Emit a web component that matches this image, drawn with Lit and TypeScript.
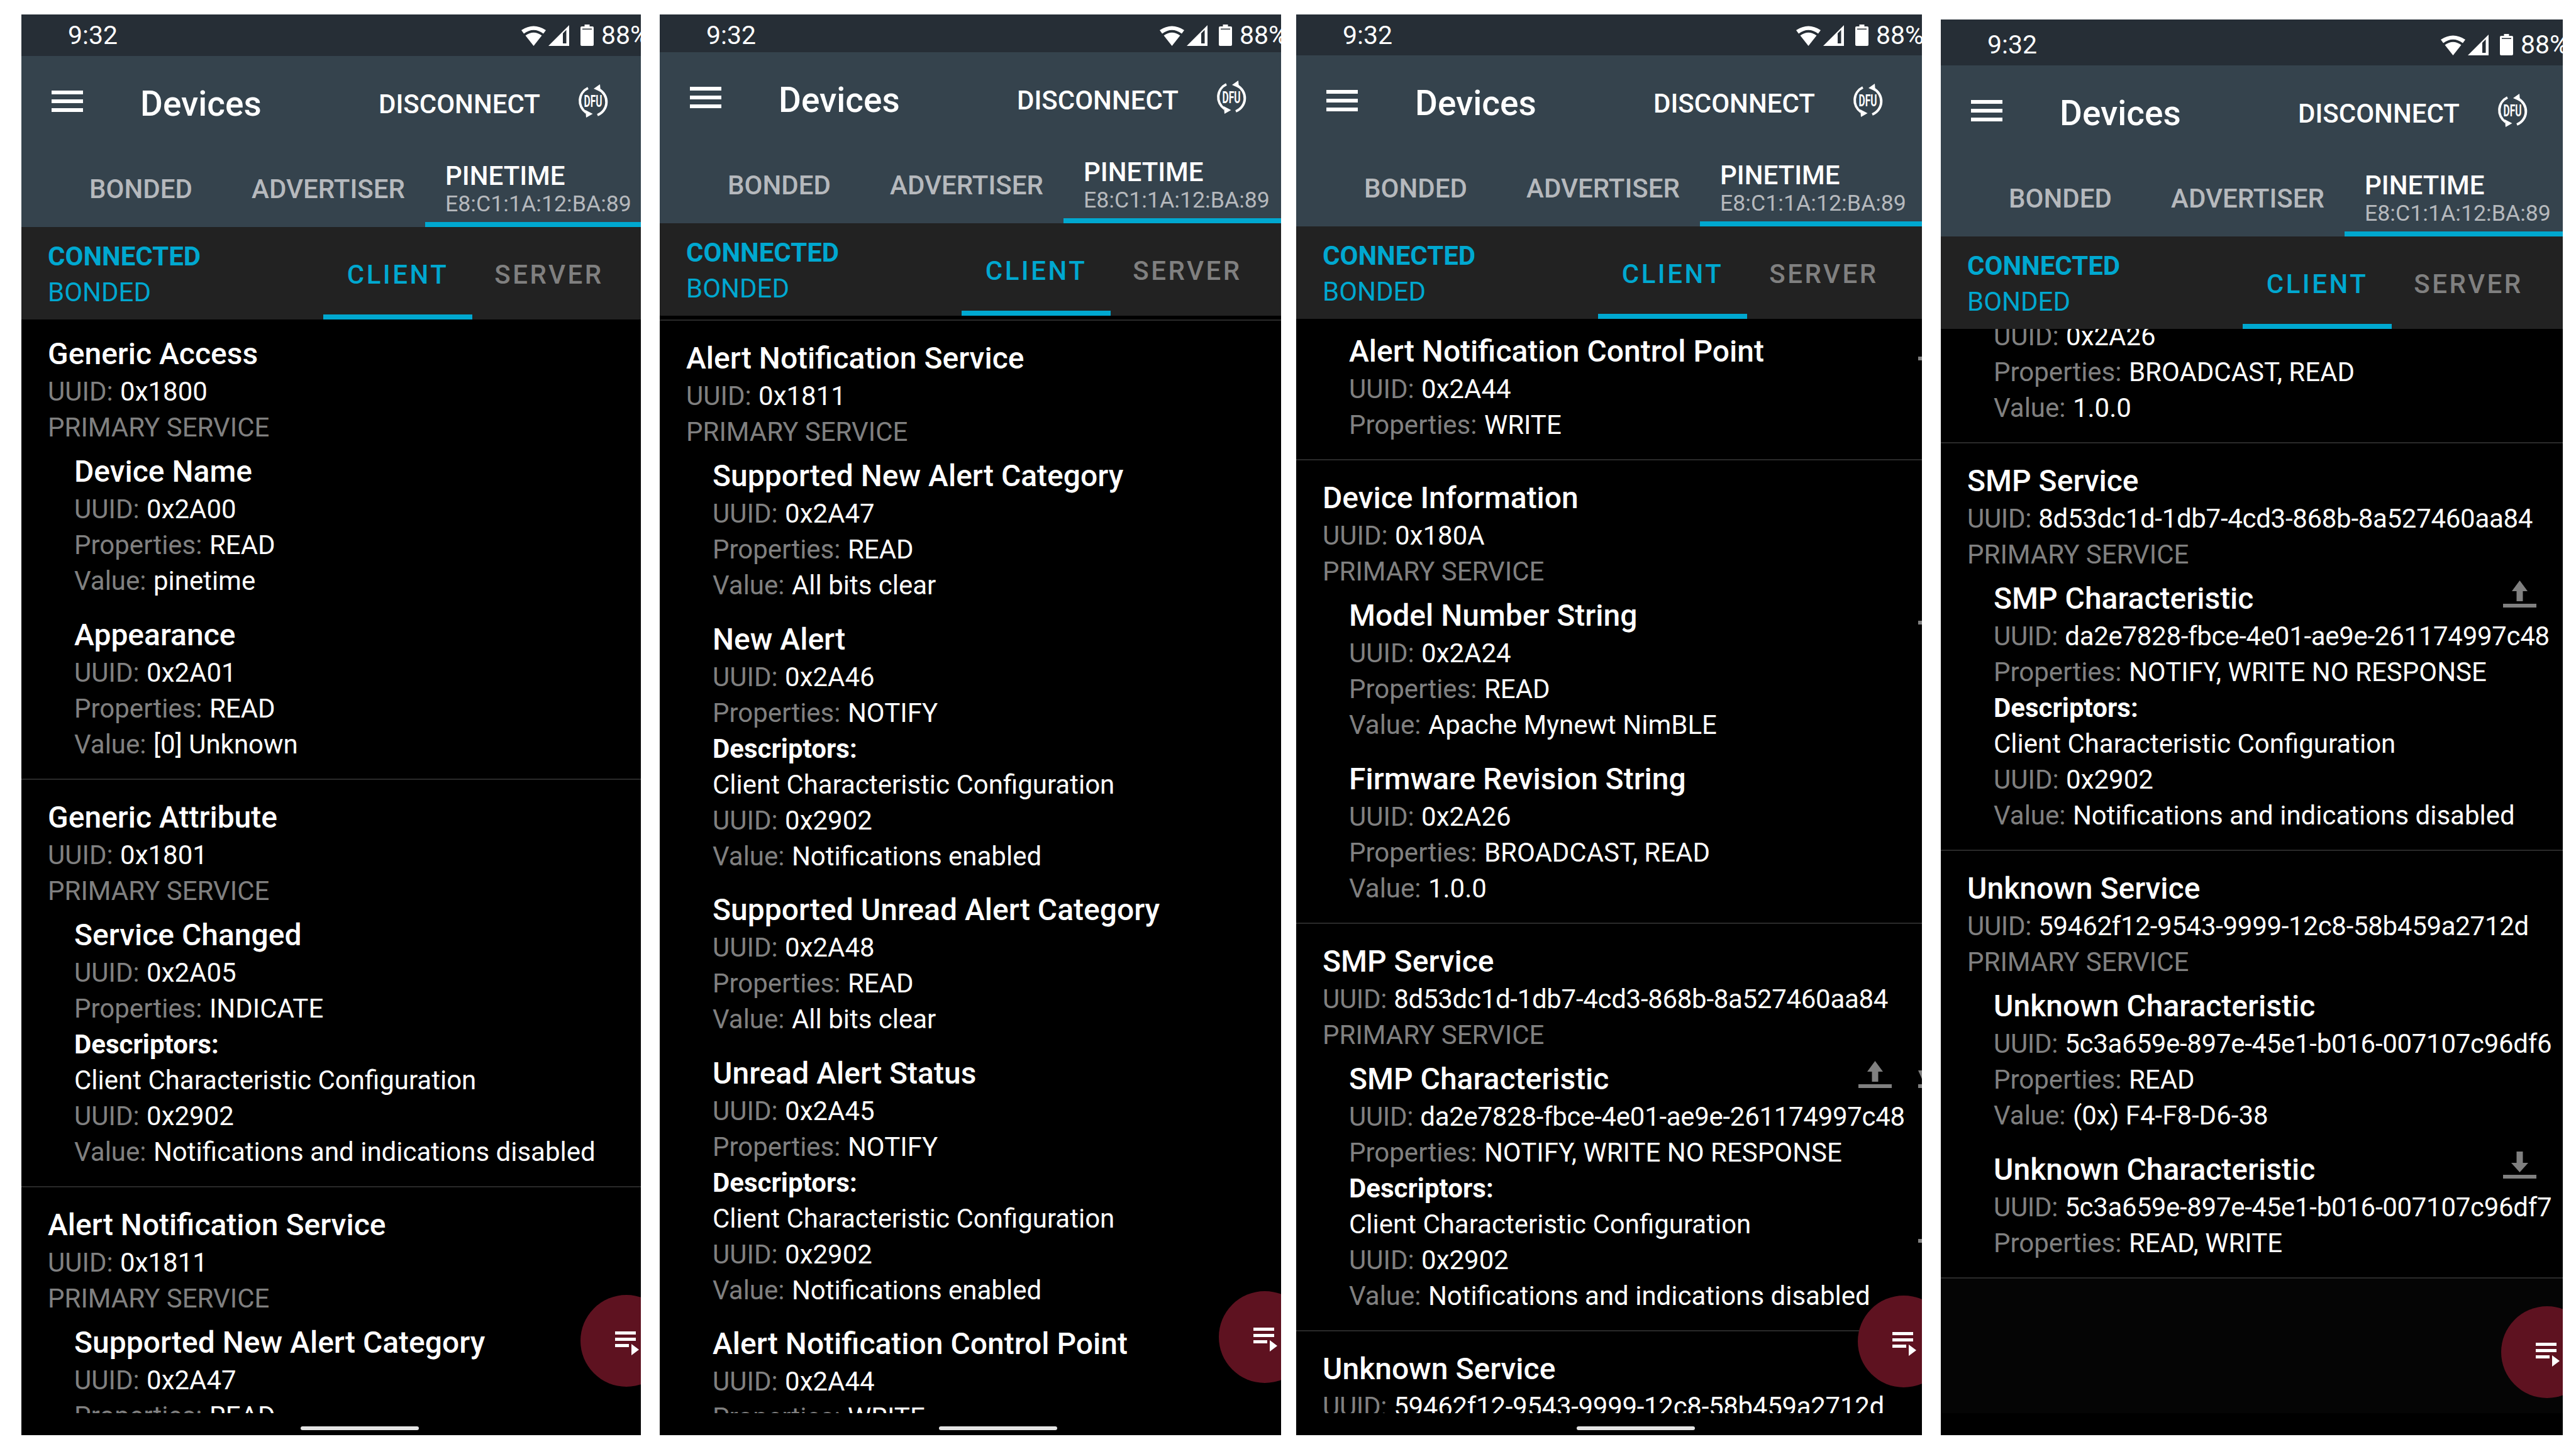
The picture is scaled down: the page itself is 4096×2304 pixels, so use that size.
import { LitElement, html, css, svg } from "lit";
import { customElement } from "lit/decorators.js";
import { classMap } from "lit/directives/class-map.js";

type Row = [string, string];
interface Char { t: string; rows: (Row | string)[]; up?: boolean; down?: boolean; edge?: number[]; head?: boolean }
interface Svc { t?: string; uuid?: string; chars: Char[] }
interface Phone { w: number; ml: number; status: number; top: number; offset: number; spacer?: number; fabTop: number; fabLeft: number; home?: number; svcs: Svc[]; fill?: boolean }

const c = (t: string, uuid: string, props: string, value?: string, extra: Partial<Char> = {}, desc?: string): Char => {
  const rows: (Row | string)[] = [["UUID:", uuid], ["Properties:", props]];
  if (value) rows.push(["Value:", value]);
  if (desc) rows.push("Descriptors:", ["", "Client Characteristic Configuration"], ["UUID:", "0x2902"], ["Value:", desc]);
  return { t, rows, ...extra };
};

const alertChars: Char[] = [
  c("Supported New Alert Category", "0x2A47", "READ", "All bits clear"),
  c("New Alert", "0x2A46", "NOTIFY", undefined, {}, "Notifications enabled"),
  c("Supported Unread Alert Category", "0x2A48", "READ", "All bits clear"),
  c("Unread Alert Status", "0x2A45", "NOTIFY", undefined, {}, "Notifications enabled"),
  c("Alert Notification Control Point", "0x2A44", "WRITE"),
];
const UD = "Notifications and indications disabled";
const smpUuid = "8d53dc1d-1db7-4cd3-868b-8a527460aa84";
const smpChar = (e: Partial<Char>) => c("SMP Characteristic", "da2e7828-fbce-4e01-ae9e-261174997c48", "NOTIFY, WRITE NO RESPONSE", undefined, e, UD);
const unknownUuid = "59462f12-9543-9999-12c8-58b459a2712d";

const phones: Phone[] = [
  { w: 985, ml: 34, status: 66, top: 23, offset: -5, fabTop: 2059, fabLeft: 889, home: 444, svcs: [
    { t: "Generic Access", uuid: "0x1800", chars: [
      c("Device Name", "0x2A00", "READ", "pinetime"),
      c("Appearance", "0x2A01", "READ", "[0] Unknown"),
    ] },
    { t: "Generic Attribute", uuid: "0x1801", chars: [
      c("Service Changed", "0x2A05", "INDICATE", undefined, {}, UD),
    ] },
    { t: "Alert Notification Service", uuid: "0x1811", chars: alertChars },
  ] },
  { w: 988, ml: 30, status: 60, top: 23, offset: -3, spacer: 9, fabTop: 2053, fabLeft: 889, home: 444, svcs: [
    { t: "Alert Notification Service", uuid: "0x1811", chars: alertChars },
  ] },
  { w: 995, ml: 24, status: 65, top: 23, offset: 10, fabTop: 2060, fabLeft: 893, home: 446, svcs: [
    { chars: [c("Alert Notification Control Point", "0x2A44", "WRITE", undefined, { edge: [3] })] },
    { t: "Device Information", uuid: "0x180A", chars: [
      c("Model Number String", "0x2A24", "READ", "Apache Mynewt NimBLE", { edge: [3] }),
      c("Firmware Revision String", "0x2A26", "BROADCAST, READ", "1.0.0"),
    ] },
    { t: "SMP Service", uuid: smpUuid, chars: [smpChar({ up: true, head: true, edge: [249] })] },
    { t: "Unknown Service", uuid: unknownUuid, chars: [] },
  ] },
  { w: 989, ml: 30, status: 73, top: 31, offset: -90, fabTop: 2077, fabLeft: 891, fill: true, svcs: [
    { chars: [c("Firmware Revision String", "0x2A26", "BROADCAST, READ", "1.0.0")] },
    { t: "SMP Service", uuid: smpUuid, chars: [smpChar({ up: true })] },
    { t: "Unknown Service", uuid: unknownUuid, chars: [
      c("Unknown Characteristic", "5c3a659e-897e-45e1-b016-007107c96df6", "READ", "(0x) F4-F8-D6-38"),
      c("Unknown Characteristic", "5c3a659e-897e-45e1-b016-007107c96df7", "READ, WRITE", undefined, { down: true }),
    ] },
  ] },
];

const upIcon = svg`<path d="M26.5 0 39 17h-7.5v16h-10V17H14z"/><rect y="37" width="53" height="6"/>`;
const downIcon = svg`<path d="M21.5 0h10v18H40L26.5 33 13 18h8.5z"/><rect y="37" width="53" height="6"/>`;
const barIcon = svg`<rect y="37" width="53" height="6"/>`;
const headIcon = svg`<path d="M0 15H8V33Z"/><rect y="37" width="53" height="6"/>`;

@customElement("app-root")
export class AppRoot extends LitElement {
  static styles = css`
    :host { display: block; width: 4096px; height: 2304px; background: #fff; font-family: Roboto, "Liberation Sans", sans-serif; overflow: hidden; }
    .page { display: flex; align-items: flex-start; }
    .phone { position: relative; flex: none; display: flex; flex-direction: column; overflow: hidden; background: #000; color: #fff; }
    .status { flex: none; background: #262e36; display: flex; align-items: center; justify-content: flex-start; padding-left: 74px; box-sizing: border-box; overflow: hidden; }
    .status-in { display: flex; align-items: center; height: 66px; margin-top: auto; flex: none; font-size: 41px; }
    .time { width: 721px; flex: none; }
    .sys { display: flex; align-items: center; flex: none; }
    .sys svg { display: block; fill: #fff; flex: none; }
    .pct { margin-left: 12px; flex: none; }
    .toolbar { flex: none; background: #35434d; }
    .tb1 { height: 148px; display: flex; align-items: center; padding-left: 48px; }
    .burger { width: 50px; height: 34px; margin-right: 91px; margin-top: -4px; flex: none; display: flex; flex-direction: column; justify-content: space-between; }
    .burger i { display: block; height: 6px; background: #fff; }
    .title { width: 379px; flex: none; font-size: 55px; font-weight: 500; margin-top: 3px; }
    .disc { width: 315px; flex: none; font-size: 42px; font-weight: 500; margin-top: 4px; }
    .dfu { display: block; margin-top: -4px; flex: none; }
    .tabs { height: 124px; display: flex; padding-left: 46px; }
    .tab { flex: none; display: flex; align-items: center; justify-content: center; font-size: 42px; font-weight: 500; color: #b6b9bd; padding-top: 2px; box-sizing: border-box; }
    .t1 { width: 288px; }
    .t2 { width: 308px; }
    .pine { flex: 1; box-sizing: border-box; border-bottom: 8px solid #00a8d0; padding-left: 32px; position: relative; }
    .pname { font-size: 42px; font-weight: 500; line-height: 44px; padding-top: 21px; }
    .pmac { font-size: 35.7px; line-height: 44px; color: #b6b9bd; white-space: nowrap; }
    .sub { flex: none; height: 147px; background: #222; display: flex; }
    .conn { width: 438px; flex: none; padding: 18px 0 0 42px; color: #00a8d0; font-size: 42px; line-height: 57px; }
    .conn b { font-weight: 700; display: block; }
    .stab { flex: none; box-sizing: border-box; display: flex; align-items: center; justify-content: center; font-size: 42px; font-weight: 500; letter-spacing: 3.5px; border-bottom: 8px solid transparent; padding-top: 11px; }
    .client { width: 237px; color: #00a8d0; border-color: #00a8d0; }
    .server { width: 244px; color: #808080; }
    .list { flex: 1; min-height: 0; overflow: hidden; }
    .fill { background: #050505; }
    .nav { flex: none; height: 35px; background: #000; }
    .spacer { border-bottom: 2px solid #2a2a2a; }
    .svc { background: #000; padding: 28px 0 26px 42px; border-bottom: 2px solid #2a2a2a; }
    .svc.cont { padding-top: 0; }
    .h { font-size: 48px; font-weight: 500; line-height: 63px; white-space: nowrap; }
    .r { font-size: 42px; line-height: 57px; white-space: nowrap; }
    .r.long { letter-spacing: -0.3px; }
    .k { color: #808080; }
    .lbl { margin-right: 1px; }
    .d { font-weight: 700; }
    .chars { padding: 10px 0 0 42px; display: flex; flex-direction: column; gap: 25.5px; }
    .char { position: relative; }
    .ico { position: absolute; left: 810px; top: 3px; display: block; fill: #808080; }
    .ico.e { left: 905px; }
    .fab { position: absolute; width: 146px; height: 146px; border-radius: 50%; background: #5e1220; }
    .fab svg { position: absolute; left: 55px; top: 58px; display: block; fill: #fff; }
    .home { position: absolute; bottom: 8px; width: 188px; height: 6px; border-radius: 3px; background: #e4e4e4; }
  `;

  private charTpl(ch: Char) {
    return html`<div class="char">
      <div class="h">${ch.t}</div>
      ${ch.up ? html`<svg class="ico" width="53" height="43" viewBox="0 0 53 43">${upIcon}</svg>` : ""}
      ${ch.down ? html`<svg class="ico" width="53" height="43" viewBox="0 0 53 43">${downIcon}</svg>` : ""}
      ${ch.head ? html`<svg class="ico e" width="53" height="43" viewBox="0 0 53 43">${headIcon}</svg>` : ""}
      ${(ch.edge || []).map((top) => html`<svg class="ico e" style="top:${top}px" width="53" height="43" viewBox="0 0 53 43">${barIcon}</svg>`)}
      ${ch.rows.map((r) => typeof r === "string"
        ? html`<div class="r d">${r}</div>`
        : html`<div class=${classMap({ r: true, long: r[0] === "UUID:" && r[1].length > 30 })}>${r[0] ? html`<span class="k lbl">${r[0]}</span> ` : ""}${r[1]}</div>`)}
    </div>`;
  }

  private phoneTpl(p: Phone) {
    const height = 2282 - p.top;
    return html`<div class="phone" style="width:${p.w}px;margin-left:${p.ml}px;margin-top:${p.top}px;height:${height}px">
      <div class="status" style="height:${p.status}px">
        <div class="status-in">
          <div class="time">9:32</div>
          <div class="sys">
            <svg width="39" height="33" viewBox="0 0 39 33"><path d="M0 8Q19.500-5 39 8L35 13.500Q19.500 2 4 13.500Z"/><path d="M6.500 16.500Q19.500 7 32.500 16.500L19.500 33Z"/></svg>
            <svg style="margin-left:4px" width="33" height="33" viewBox="0 0 33 33"><path fill-rule="evenodd" d="M0 33 33 0V33ZM23 13V29H28.500V7.500Z"/></svg>
            <svg style="margin-left:18px" width="21" height="34" viewBox="0 0 21 34"><path fill-rule="evenodd" d="M6.500 0h8v3H19a2 2 0 0 1 2 2v27a2 2 0 0 1-2 2H2a2 2 0 0 1-2-2V5a2 2 0 0 1 2-2h4.500zM3 6.500V8H18V6.500z"/></svg>
            <span class="pct">88%</span>
          </div>
        </div>
      </div>
      <div class="toolbar">
        <div class="tb1">
          <div class="burger"><i></i><i></i><i></i></div>
          <div class="title">Devices</div>
          <div class="disc">DISCONNECT</div>
          <svg class="dfu" width="52" height="54" viewBox="0 0 52 54">
            <path d="M18 6A22.500 22.500 0 0 0 15 45" fill="none" stroke="#fff" stroke-width="4"/>
            <path d="M35 8A22.500 22.500 0 0 1 33 49" fill="none" stroke="#fff" stroke-width="4"/>
            <path d="M37 0 27 7 38 12Z" fill="#fff"/><path d="M15 53 25.500 47 14 41Z" fill="#fff"/>
            <text x="26" y="36" text-anchor="middle" font-family="Roboto" font-weight="700" font-size="26" fill="#fff" textLength="29" lengthAdjust="spacingAndGlyphs">DFU</text>
          </svg>
        </div>
        <div class="tabs">
          <div class="tab t1">BONDED</div>
          <div class="tab t2">ADVERTISER</div>
          <div class="pine"><div class="pname">PINETIME</div><div class="pmac">E8:C1:1A:12:BA:89</div></div>
        </div>
      </div>
      <div class="sub">
        <div class="conn"><b>CONNECTED</b>BONDED</div>
        <div class="stab client">CLIENT</div>
        <div class="stab server">SERVER</div>
      </div>
      <div class="list ${p.fill ? "fill" : ""}">
        <div style="margin-top:${p.offset}px">
          ${p.spacer ? html`<div class="spacer" style="height:${p.spacer}px"></div>` : ""}
          ${p.svcs.map((s) => html`<div class="svc ${s.t ? "" : "cont"}">
            ${s.t ? html`<div class="h">${s.t}</div>
              <div class=${classMap({ r: true, long: (s.uuid || "").length > 30 })}><span class="k lbl">UUID:</span> ${s.uuid}</div>
              <div class="r k">PRIMARY SERVICE</div>` : ""}
            ${s.chars.length ? html`<div class="chars">${s.chars.map((ch) => this.charTpl(ch))}</div>` : ""}
          </div>`)}
        </div>
      </div>
      <div class="nav"></div>
      <div class="fab" style="left:${p.fabLeft}px;top:${p.fabTop - p.top}px">
        <svg width="40" height="38" viewBox="0 0 40 38"><rect width="33" height="5"/><rect y="10" width="33" height="5"/><rect y="20" width="22" height="5"/><path d="M26 20 38 29 26 38Z"/></svg>
      </div>
      ${p.home ? html`<div class="home" style="left:${p.home}px"></div>` : ""}
    </div>`;
  }

  render() {
    return html`<div class="page">${phones.map((p) => this.phoneTpl(p))}</div>`;
  }
}
